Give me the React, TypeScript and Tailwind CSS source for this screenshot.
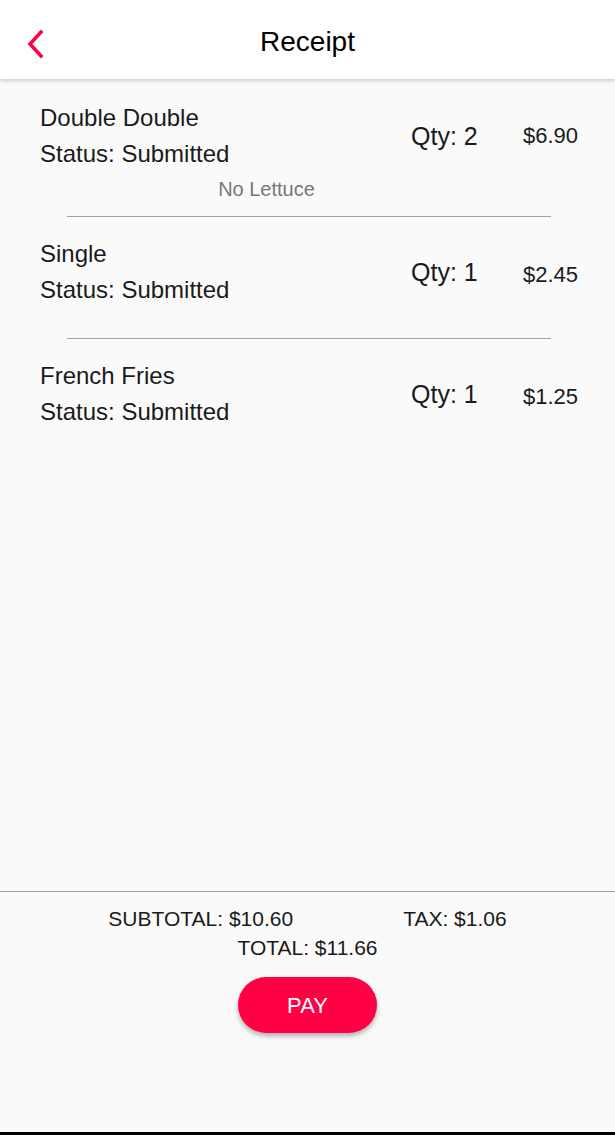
import React from 'react';

interface OrderItem {
  name: string;
  status: string;
  qty: number;
  price: string;
  note?: string;
}

const items: OrderItem[] = [
  { name: 'Double Double', status: 'Submitted', qty: 2, price: '$6.90', note: 'No Lettuce' },
  { name: 'Single', status: 'Submitted', qty: 1, price: '$2.45' },
  { name: 'French Fries', status: 'Submitted', qty: 1, price: '$1.25' },
];

const font = { fontFamily: '"Liberation Sans", Arial, sans-serif' };

const ItemRow: React.FC<{ item: OrderItem; first: boolean; last: boolean }> = ({ item, first, last }) => (
  <div>
    <div className={first ? 'pt-[21px] pb-[15px]' : 'pt-[19px] pb-[30px]'}>
      <div className="flex items-center pl-10 pr-[35px] text-[#1a1a1a]">
        <div className="flex-1 text-[24px] leading-[36px]">
          <div>{item.name}</div>
          <div>Status: {item.status}</div>
        </div>
        <div className="w-[112px] text-[25px] leading-[36px]">Qty: {item.qty}</div>
        <div className={item.note ? 'w-[57px] text-[22px] leading-[36px]' : 'w-[57px] pt-[5px] text-[22px] leading-[36px]'}>
          {item.price}
        </div>
      </div>
      {item.note && (
        <div className="mt-[5px] pr-[82px] text-center text-[20px] leading-[24px] text-[#777]">
          {item.note}
        </div>
      )}
    </div>
    {!last && <div className="ml-[67px] mr-[64px] border-t border-[#a3a3a3]" />}
  </div>
);

export default function App() {
  return (
    <div style={font} className="flex h-[1135px] w-[615px] flex-col bg-[#fafafa]">
      <header className="relative z-10 flex h-[79px] items-center justify-center bg-white pt-1 shadow-[0_2px_4px_rgba(0,0,0,0.18)]">
        <button className="absolute left-[21px] top-[25px] p-1">
          <svg width="20" height="30" viewBox="0 0 20 30" fill="none">
            <path d="M16 3 L5 15 L16 27" stroke="#ff0045" strokeWidth="3.5" strokeLinecap="square" />
          </svg>
        </button>
        <h1 className="text-[28px] text-black">Receipt</h1>
      </header>

      <main className="flex-1">
        {items.map((item, i) => (
          <ItemRow key={item.name} item={item} first={i === 0} last={i === items.length - 1} />
        ))}
      </main>

      <footer className="h-[241px] border-t border-[#9e9e9e] pt-3 text-[#1a1a1a]">
        <div className="flex justify-center gap-[110px] text-[21px] leading-[29px]">
          <span>SUBTOTAL: $10.60</span>
          <span>TAX: $1.06</span>
        </div>
        <div className="text-center text-[21px] leading-[29px]">TOTAL: $11.66</div>
        <div className="mt-[15px] flex justify-center">
          <button className="h-[56px] w-[139px] rounded-full bg-[#ff0045] text-[22px] font-medium text-white shadow-[0_3px_5px_rgba(0,0,0,0.3)]">
            PAY
          </button>
        </div>
      </footer>

      <div className="h-[3px] bg-black" />
    </div>
  );
}
